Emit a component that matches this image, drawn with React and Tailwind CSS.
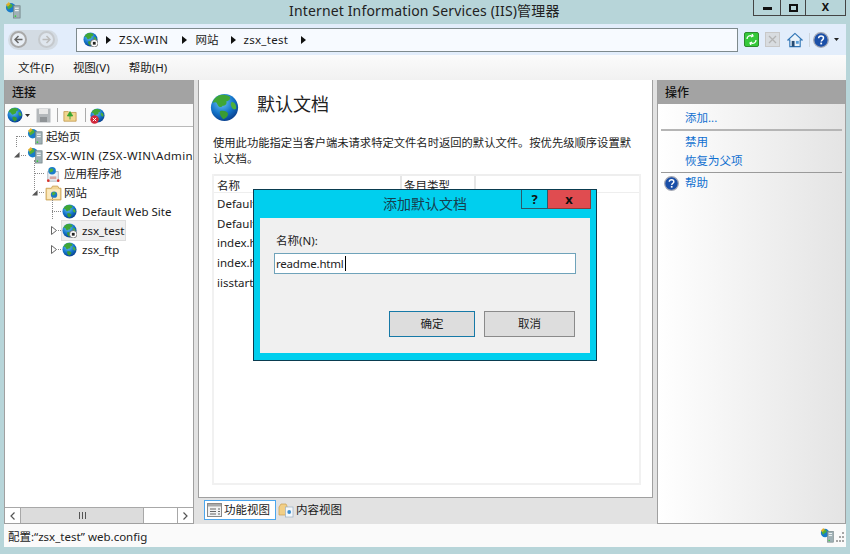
import React from "react";

const FONT = "font-['Noto_Sans','Noto_Sans_CJK_SC',sans-serif]";

function Globe({ size = 16, badge = false, className = "" }) {
  return (
    <svg width={size} height={size} viewBox="0 0 32 32" className={`shrink-0 ${className}`}>
      <defs>
        <radialGradient id="gl" cx="0.4" cy="0.3" r="0.8">
          <stop offset="0" stopColor="#6fc6f5" />
          <stop offset="0.55" stopColor="#1273c9" />
          <stop offset="1" stopColor="#07307c" />
        </radialGradient>
      </defs>
      <circle cx="16" cy="16" r="15" fill="url(#gl)" />
      <path d="M9 3c5-2 10-1 13 1 1 3-2 5-4 5 1 3-1 5-4 5-2 3-5 1-6-2-1-2-3-2-5-1 0-3 3-6 6-8z" fill="#3fa636" />
      <path d="M24 10c3 0 5 3 5 7-2 2-4 1-5-1-1-2-2-4 0-6z" fill="#4caf3c" />
      <path d="M11 20c4-1 8 0 9 3 0 3-3 5-5 6-2-2-5-5-4-9z" fill="#3a9b34" />
      {badge && (
        <g>
          <circle cx="24" cy="24" r="8" fill="#fff" stroke="#555" strokeWidth="1.5" />
          <rect x="21" y="21" width="6" height="6" fill="#222" />
        </g>
      )}
    </svg>
  );
}

function Server({ size = 17 }) {
  return (
    <svg width={size} height={size} viewBox="0 0 18 18" className="shrink-0">
      <circle cx="6" cy="6" r="5" fill="#1a7cc9" />
      <path d="M3 3c2-2 5-1 5 1S5 6 4 8C2 7 2 4 3 3z" fill="#4caf3c" />
      <path d="M1 3l3-3 2 2-3 3z" fill="#f2b21c" opacity=".85" />
      <rect x="9" y="4" width="7" height="13" fill="#9fb0b5" stroke="#6d7d80" strokeWidth=".7" />
      <rect x="10.5" y="6" width="4" height="1.2" fill="#eef3f4" />
      <rect x="10.5" y="8.5" width="4" height="1.2" fill="#eef3f4" />
      <circle cx="11" cy="15" r=".9" fill="#39d13c" />
    </svg>
  );
}

function Folder({ size = 16, earth = false }) {
  return (
    <svg width={size} height={size} viewBox="0 0 16 16" className="shrink-0">
      <path d="M1 4h5l1-2h5l1 2h2v11H1z" fill="#f2d697" stroke="#c79c4a" strokeWidth=".8" />
      <rect x="2" y="5" width="12" height="9" fill="#fbe9bd" />
      {earth && <circle cx="8.5" cy="10" r="3" fill="#1b78c8" />}
      {earth && <path d="M7 8c2-1 3 0 3 1s-2 1-2 2c-1 0-2-2-1-3z" fill="#4caf3c" />}
    </svg>
  );
}

function DocFolder() {
  return (
    <svg width="16" height="16" viewBox="0 0 16 16" className="shrink-0">
      <path d="M1 5l2-3h5l1 2v9H1z" fill="#f2cf86" stroke="#c99f52" strokeWidth=".7" />
      <rect x="7.5" y="5" width="7.5" height="10" fill="#f4f8fb" stroke="#9ab0c4" strokeWidth=".7" />
      <circle cx="11.2" cy="10" r="1.9" fill="#3d8fd0" />
    </svg>
  );
}

function Pool() {
  return (
    <svg width="17" height="17" viewBox="0 0 18 18" className="shrink-0">
      <rect x="3" y="6" width="11" height="10" fill="#eef2f5" stroke="#9aa6b0" strokeWidth=".8" />
      <circle cx="7.5" cy="5" r="4" fill="#1b7ccb" />
      <path d="M5.5 3c2-1 4 0 3 2s-2 1-3 2c-1-1-1-3 0-4z" fill="#4caf3c" />
      <path d="M5 11h7v3H5z" fill="#d8a9a4" />
      <circle cx="3.5" cy="15.5" r="1.4" fill="#d9342b" />
      <circle cx="14" cy="15.5" r="1.4" fill="#d9342b" />
    </svg>
  );
}

function HelpIcon({ size = 16 }) {
  return (
    <svg width={size} height={size} viewBox="0 0 16 16" className="shrink-0">
      <circle cx="8" cy="8" r="7.3" fill="#1a4fa8" stroke="#a4a8b4" strokeWidth="1.3" />
      <path d="M5.6 6.2C5.7 4.7 6.8 4 8.1 4c1.4 0 2.4.8 2.4 2 0 1.9-2.2 1.7-2.2 3.6" fill="none" stroke="#fff" strokeWidth="1.5" />
      <rect x="7.3" y="10.6" width="1.8" height="1.8" fill="#fff" />
    </svg>
  );
}

function Tri({ open }) {
  return open ? (
    <svg width="6" height="6" viewBox="0 0 7 7" className="shrink-0"><path d="M0 6.5h6.5V0z" fill="#555" /></svg>
  ) : (
    <svg width="6" height="9" viewBox="0 0 6 9" className="shrink-0"><path d="M.5.5l5 4-5 4z" fill="#fff" stroke="#666" /></svg>
  );
}

function Crumb({ className = "" }) {
  return <svg width="5" height="8" viewBox="0 0 5 8" className={`shrink-0 ${className}`}><path d="M0 0l5 4-5 4z" fill="#111" /></svg>;
}

function TreeRow({ indent, tri, icon, label, selected, dots = 0, gap = 1, vline }) {
  return (
    <div className="relative flex h-[18.8px] items-center" style={{ paddingLeft: indent }}>
      {vline && (
        <span
          className="absolute w-0 border-l border-dotted border-[#888]"
          style={{ left: vline.left, top: vline.top, height: vline.height }}
        />
      )}
      <span className="flex w-[7px] shrink-0 items-center justify-start">{tri}</span>
      <span className="h-0 shrink-0 border-t border-dotted border-[#888]" style={{ width: dots }} />
      <span
        className={`ml-[1px] flex h-[19px] shrink-0 items-center whitespace-nowrap pr-[1px] ${
          selected ? "bg-[#efefef] outline outline-[#dddddd]" : ""
        }`}
      >
        {icon}
        <span className="pl-[1px]" style={{ marginLeft: gap }}>{label}</span>
      </span>
    </div>
  );
}

function Link({ children }) {
  return <div className="h-[19px] pl-[27px] leading-[19px] text-[#0f6fd0]">{children}</div>;
}

export default function App() {
  return (
    <div className={`relative flex h-[554px] w-[850px] flex-col overflow-hidden bg-[#b7d5d9] text-[11.5px] text-[#1a1a1a] ${FONT}`}>
      {/* title bar */}
      <div className="flex h-[24px] shrink-0 items-start">
        <span className="ml-[5px] mt-[2px]"><Server size={17} /></span>
        <div className="flex-1 pl-[267px] pt-[1px] text-[14px] leading-[19px] tracking-[0.15px] text-[#222]">
          Internet Information Services (IIS)管理器
        </div>
        <div className="mr-[4px] flex h-[16px] w-[93px] border border-t-0 border-[#444] bg-[#b7d5d9]">
          <div className="flex w-[27px] items-center justify-center border-r border-[#444]">
            <span className="mt-[2px] h-[3px] w-[9px] bg-[#111]" />
          </div>
          <div className="flex w-[25px] items-center justify-center border-r border-[#444]">
            <span className="h-[8px] w-[9px] border-2 border-[#111]" />
          </div>
          <div className="flex-1 text-center text-[11px] font-bold leading-[14px] text-[#111]">X</div>
        </div>
      </div>

      {/* client */}
      <div className="mx-[4px] flex min-h-0 flex-1 flex-col">
        {/* address */}
        <div className="flex h-[31px] shrink-0 items-center bg-[#e2edfb]">
          <div className="ml-[4px] flex h-[20px] w-[50px] shrink-0 items-center gap-[3px] rounded-full bg-[#d3dbe3] px-[2px]">
            <span className="flex h-[17px] w-[17px] shrink-0 items-center justify-center rounded-full border-2 border-[#a9a9a9] bg-[#e8eef5]">
              <svg width="9" height="9" viewBox="0 0 9 9"><path d="M8.5 4.5H1.5M4.5 1L1 4.5 4.5 8" fill="none" stroke="#666" strokeWidth="1.5" /></svg>
            </span>
            <span className="ml-[8px] flex h-[17px] w-[17px] shrink-0 items-center justify-center rounded-full border-2 border-[#c5c9cd] bg-[#dfe6ee]">
              <svg width="9" height="9" viewBox="0 0 9 9"><path d="M.5 4.5h7M4.5 1L8 4.5 4.5 8" fill="none" stroke="#bbb" strokeWidth="1.5" /></svg>
            </span>
          </div>
          <div className="ml-[18px] flex h-[24px] w-[662px] shrink-0 items-center border border-[#7e8a8d] bg-[#f7faff] pl-[6px]">
            <Globe size={15} badge />
            <Crumb className="ml-[8px]" />
            <span className="ml-[8px] tracking-[0.4px]">ZSX-WIN</span>
            <Crumb className="ml-[14px]" />
            <span className="ml-[8px]">网站</span>
            <Crumb className="ml-[13px]" />
            <span className="ml-[7px] tracking-[0.3px]">zsx_test</span>
            <Crumb className="ml-[13px]" />
          </div>
          <div className="ml-[6px] flex h-[15px] w-[15px] shrink-0 items-center justify-center rounded-[2px] border border-[#2c8a2c] bg-[#35c93a]">
            <svg width="11" height="11" viewBox="0 0 11 11"><path d="M1 5c0-3 3-4 5-3M10 6c0 3-3 4-5 3M6 0l1 2-2 1M5 11L4 9l2-1" fill="none" stroke="#fff" strokeWidth="1.3" /></svg>
          </div>
          <div className="ml-[6px] flex h-[15px] w-[15px] shrink-0 items-center justify-center border border-[#c8c8c8] bg-[#d8dce0]">
            <svg width="9" height="9" viewBox="0 0 9 9"><path d="M1 1l7 7M8 1L1 8" stroke="#b4b4b4" strokeWidth="1.3" /></svg>
          </div>
          <svg width="16" height="16" viewBox="0 0 17 16" className="ml-[7px] shrink-0">
            <path d="M8.5 1L1 8h2v7h11V8h2z" fill="#e9f2fa" stroke="#2f74b5" strokeWidth="1.2" />
            <rect x="9.5" y="9" width="3" height="3" fill="#5a9fd8" />
            <rect x="5" y="9" width="3" height="6" fill="#254a72" />
          </svg>
          <span className="ml-[6px] h-[14px] w-[1px] shrink-0 bg-[#cdd5dd]" />
          <span className="ml-[3px]"><HelpIcon size={16} /></span>
          <svg width="5" height="3" viewBox="0 0 5 3" className="ml-[5px] shrink-0"><path d="M0 0h5L2.5 3z" fill="#222" /></svg>
        </div>

        {/* menu */}
        <div className="flex h-[25px] shrink-0 items-center bg-gradient-to-b from-[#fbfbfb] to-[#f1f1f1] pl-[14px]">
          <span>文件(F)</span>
          <span className="ml-[19px]">视图(V)</span>
          <span className="ml-[19px]">帮助(H)</span>
        </div>

        {/* panels */}
        <div className="flex min-h-0 flex-1 bg-[#e2e2e2]">
          {/* left */}
          <div className="flex h-[444px] w-[190px] shrink-0 flex-col border border-t-0 border-[#a0a0a0] bg-white">
            <div className="h-[24px] shrink-0 bg-[#a3a3a3] pl-[7px] pt-[2px] text-[12px] font-medium leading-[22px] text-[#111]">连接</div>
            <div className="flex h-[23px] shrink-0 items-center border-b border-[#b9b9b9] bg-[#fafafa] pl-[2px]">
              <Globe size={16} />
              <svg width="5" height="3" viewBox="0 0 5 3" className="ml-[2px] shrink-0"><path d="M0 0h5L2.5 3z" fill="#333" /></svg>
              <svg width="15" height="15" viewBox="0 0 15 15" className="ml-[6px] shrink-0">
                <rect x=".5" y=".5" width="14" height="14" fill="#b4b8bb" />
                <rect x="3" y="1" width="9" height="5" fill="#e8e8e8" />
                <rect x="4" y="9" width="7" height="5" fill="#8f9396" />
              </svg>
              <span className="ml-[6px] h-[14px] w-[1px] shrink-0 bg-[#aaa]" />
              <svg width="14" height="15" viewBox="0 0 16 15" className="ml-[5px] shrink-0">
                <path d="M1 3h5l1 1h8v10H1z" fill="#f1d590" stroke="#b98c3c" strokeWidth=".8" />
                <path d="M8 12V6M5 8l3-5 3 5z" fill="#37a630" stroke="#37a630" />
              </svg>
              <span className="ml-[8px] h-[14px] w-[1px] shrink-0 bg-[#aaa]" />
              <span className="relative ml-[4px]">
                <Globe size={15} />
                <svg width="9" height="9" viewBox="0 0 9 9" className="absolute -bottom-[1px] left-0">
                  <circle cx="4.5" cy="4.5" r="4.2" fill="#d2263a" />
                  <path d="M2.8 2.8l3.4 3.4M6.2 2.8L2.8 6.2" stroke="#fff" strokeWidth="1" />
                </svg>
              </span>
            </div>
            <div className="min-h-0 flex-1 overflow-hidden">
              <TreeRow indent={4} dots={10} icon={<Server />} label="起始页" vline={{ left: 11, top: 9, height: 11 }} />
              <TreeRow indent={9} tri={<Tri open />} dots={5} icon={<Server />} label={<span className="tracking-[0.35px]">ZSX-WIN (ZSX-WIN\Administrator)</span>} vline={{ left: 29, top: 14, height: 30 }} />
              <TreeRow indent={23} dots={9} icon={<Pool />} label="应用程序池" />
              <TreeRow indent={27} tri={<Tri open />} dots={5} icon={<Folder size={17} earth />} label="网站" vline={{ left: 47, top: 14, height: 22 }} />
              <TreeRow indent={40} dots={9} gap={4} icon={<Globe size={15} />} label="Default Web Site" />
              <TreeRow indent={46} tri={<Tri />} dots={3} gap={4} icon={<Globe size={15} badge />} label="zsx_test" selected />
              <TreeRow indent={46} tri={<Tri />} dots={3} gap={4} icon={<Globe size={15} />} label="zsx_ftp" />
            </div>
            <div className="flex h-[16px] shrink-0 border-t border-[#a8a8a8] text-[#555]">
              <div className="flex w-[16px] items-center justify-center border-r border-[#a8a8a8]">
                <svg width="5" height="8" viewBox="0 0 5 8"><path d="M4.5.5L1 4l3.5 3.5" fill="none" stroke="#555" strokeWidth="1.2" /></svg>
              </div>
              <div className="flex w-[123px] items-center justify-center border-r border-[#a8a8a8] bg-[#dcdcdc]">
                <span className="h-[7px] w-[7px] border-x border-[#555] bg-[linear-gradient(90deg,transparent_2px,#555_2px,#555_3px,transparent_3px)]" />
              </div>
              <div className="flex-1 border-r border-[#a8a8a8]" />
              <div className="flex w-[15px] items-center justify-center">
                <svg width="5" height="8" viewBox="0 0 5 8"><path d="M.5.5L4 4 .5 7.5" fill="none" stroke="#555" strokeWidth="1.2" /></svg>
              </div>
            </div>
          </div>

          {/* center */}
          <div className="ml-[4px] flex h-[444px] w-[455px] shrink-0 flex-col">
            <div className="flex h-[418px] shrink-0 flex-col border border-t-0 border-[#a0a0a0] bg-white pl-[11px] pr-[11px]">
              <div className="flex h-[55px] items-center">
                <Globe size={29} />
                <span className="mb-[7px] ml-[18px] text-[18px] leading-[24px] text-[#222]">默认文档</span>
              </div>
              <p className="ml-[3px] h-[39px] text-[11.3px] leading-[16px] text-[#222]">
                使用此功能指定当客户端未请求特定文件名时返回的默认文件。按优先级顺序设置默认文档。
              </p>
              <div className="ml-[2px] flex h-[311px] flex-col border-2 border-t-0 border-[#f1f1f1]">
                <div className="flex h-[19px] shrink-0 border-t-2 border-b border-[#eeeeee] leading-[20px]">
                  <div className="w-[188px] border-r-2 border-[#e6e6e6] pl-[3px]">名称</div>
                  <div className="w-[74px] border-r-2 border-[#e6e6e6] pl-[2px]">条目类型</div>
                </div>
                <div className="pl-[3px] pt-[1px] leading-[19.7px] text-[#222]">
                  <div>Default.htm</div>
                  <div>Default.asp</div>
                  <div>index.htm</div>
                  <div>index.html</div>
                  <div>iisstart.htm</div>
                </div>
              </div>
            </div>
            <div className="ml-[6px] mt-[2px] flex h-[20px] items-center">
              <div className="flex h-[20px] w-[72px] shrink-0 items-center border border-[#4ba6ee] bg-white pl-[2px]">
                <svg width="15" height="14" viewBox="0 0 15 14" className="shrink-0">
                  <rect x=".5" y=".5" width="14" height="13" fill="#f2f2f2" stroke="#888" />
                  <rect x="1" y="1" width="13" height="2.5" fill="#a9a9a9" />
                  <path d="M3 6h6M3 8.5h6M3 11h6M11 6h2M11 8.5h2M11 11h2" stroke="#666" />
                </svg>
                <span className="ml-[2px] whitespace-nowrap">功能视图</span>
              </div>
              <span className="ml-[2px]"><DocFolder /></span>
              <span className="ml-[2px]">内容视图</span>
            </div>
          </div>

          {/* right */}
          <div className="ml-[4px] flex h-[444px] w-[189px] shrink-0 flex-col border border-t-0 border-[#a0a0a0] bg-gradient-to-r from-white to-[#e4e4e4]">
            <div className="h-[24px] shrink-0 bg-[#a3a3a3] pl-[7px] pt-[2px] text-[12px] font-medium leading-[22px] text-[#111]">操作</div>
            <div className="pt-[4px]">
              <Link>添加...</Link>
            </div>
            <div className="mx-[3px] mt-[2px] h-[2px] bg-[#b5b5b5]" />
            <div className="pt-[1px]">
              <Link>禁用</Link>
              <Link>恢复为父项</Link>
            </div>
            <div className="mx-[3px] mt-[2px] h-[1px] bg-[#9a9a9a]" />
            <div className="flex h-[19px] items-center pl-[6px] pt-[1px] text-[#0f6fd0]">
              <HelpIcon size={15} />
              <span className="ml-[6px]">帮助</span>
            </div>
          </div>
        </div>

        {/* status */}
        <div className="flex h-[23px] shrink-0 items-center justify-between bg-[#fafafa] pl-[4px]">
          <span className="mt-[3px] text-[#222]">配置:“zsx_test” web.config</span>
          <span className="mr-[1px] flex items-end">
            <Server size={15} />
            <svg width="9" height="12" viewBox="0 0 9 12" className="ml-[1px]">
              <path d="M6 1h2v2H6zM3 5h2v2H3zM6 5h2v2H6zM0 9h2v2H0zM3 9h2v2H3zM6 9h2v2H6z" fill="#a6a6a6" />
            </svg>
          </span>
        </div>
      </div>
      <div className="h-[7px] shrink-0" />

      {/* dialog */}
      <div className="absolute left-[253px] top-[189px] flex h-[172px] w-[344px] flex-col border border-[#0a3c50] bg-[#00cfee]">
        <div className="relative h-[28px] shrink-0 pt-[2px] text-center text-[14px] leading-[23px] text-[#16404f]">
          添加默认文档
          <div className="absolute right-[5px] top-0 flex h-[19px]">
            <div className="flex w-[27px] items-center justify-center border-x border-b border-[#2b5a6b] text-[13px] font-bold text-[#111]">?</div>
            <div className="flex w-[43px] items-center justify-center border-r border-b border-[#8a3a3a] bg-[#e04c50] text-[13px] font-bold text-[#111]">x</div>
          </div>
        </div>
        <div className="mx-[6px] flex h-[135px] flex-col bg-[#f0f0f0] pl-[14px] pr-[14px] pt-[14px] text-[#222]">
          <div className="h-[18px] pl-[2px] leading-[18px]">名称(N):</div>
          <div className="mt-[3px] flex h-[21px] w-[302px] items-center border border-[#6fa3ba] bg-white pl-[1px] leading-none tracking-[-0.2px]">
            readme.html<span className="ml-[1px] h-[15px] w-[1px] bg-black" />
          </div>
          <div className="mt-[37px] flex gap-[9px] pl-[115px]">
            <div className="flex h-[26px] w-[86px] items-center justify-center border border-[#1679a7] bg-[#dddddd]">确定</div>
            <div className="flex h-[26px] w-[91px] items-center justify-center border border-[#8a8a8a] bg-[#dddddd]">取消</div>
          </div>
        </div>
      </div>
    </div>
  );
}
